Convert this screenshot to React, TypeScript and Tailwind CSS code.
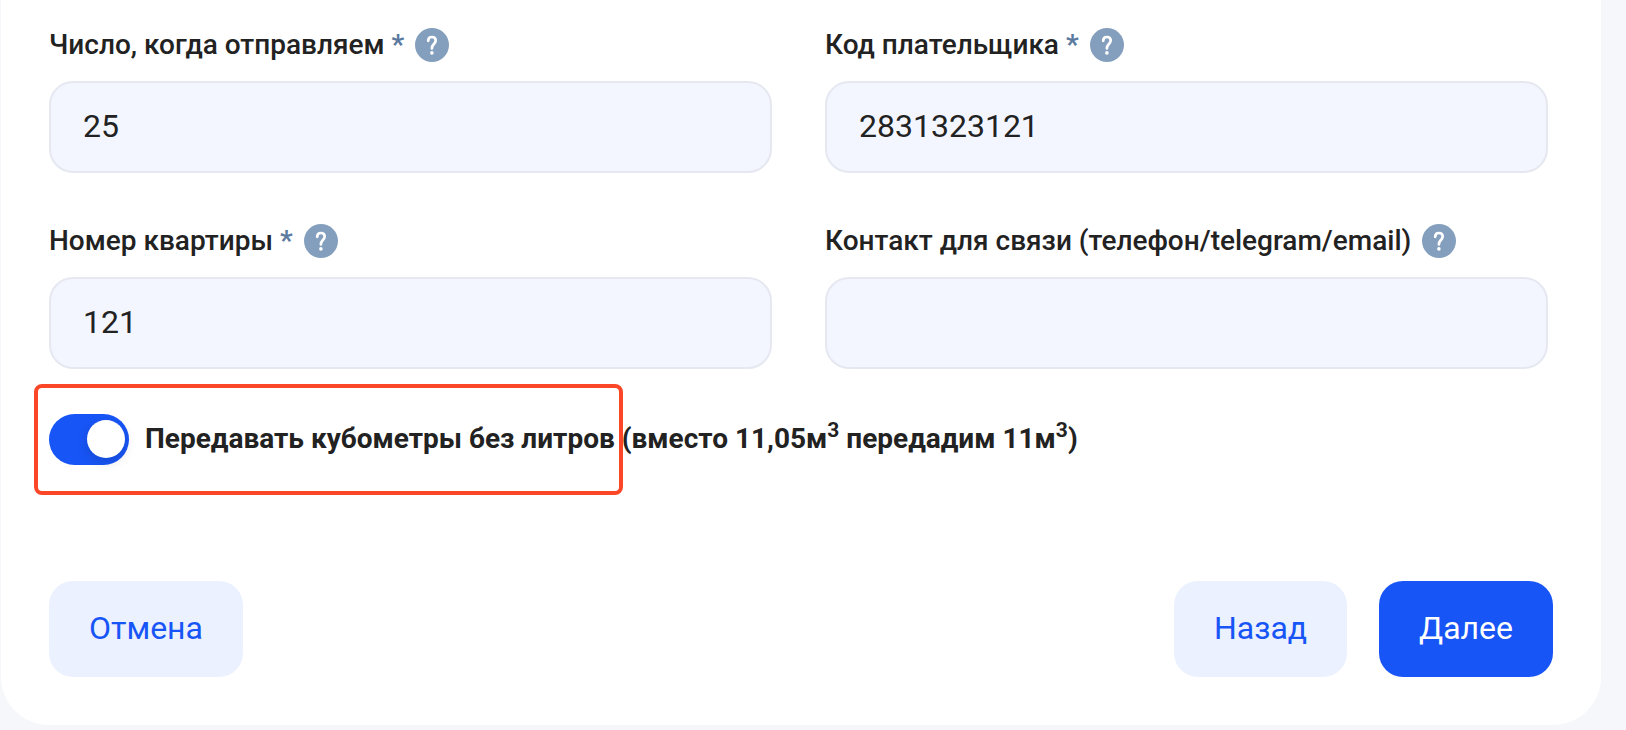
import React from "react";

interface FieldProps {
  id: string;
  label: string;
  required?: boolean;
  defaultValue?: string;
}

const HelpButton: React.FC = () => (
  <button
    type="button"
    aria-label="Подсказка"
    className="flex size-[34px] shrink-0 items-center justify-center rounded-full bg-[#849fbd]"
  >
    <svg viewBox="0 0 34 34" className="size-full" fill="none" aria-hidden="true">
      <path
        d="M13.2 12.8C13.2 10.4 14.7 9 16.9 9C19.2 9 20.7 10.4 20.7 12.6C20.7 14.2 19.9 15.1 18.7 16.3C17.4 17.6 16.9 18.5 16.9 20.4"
        stroke="white"
        strokeWidth="2.7"
        strokeLinecap="round"
        strokeLinejoin="round"
      />
      <circle cx="16.9" cy="24.9" r="1.8" fill="white" />
    </svg>
  </button>
);

const Field: React.FC<FieldProps> = ({
  id,
  label,
  required = false,
  defaultValue = "",
}) => (
  <div className="flex min-w-0 flex-col gap-[19px]">
    <div className="flex h-[34px] items-center gap-[11px]">
      <label htmlFor={id} className="text-[28px] leading-8 font-medium">
        {label}
        {required && <span className="font-bold text-[#5b7a9f]"> *</span>}
      </label>
      <HelpButton />
    </div>
    <input
      id={id}
      type="text"
      required={required}
      defaultValue={defaultValue}
      className="h-[92px] w-full rounded-3xl border-2 border-[#e5e8f0] bg-[#f3f6ff] px-8 pb-0.5 text-[32px] outline-none"
    />
  </div>
);

const fields: FieldProps[] = [
  {
    id: "day",
    label: "Число, когда отправляем",
    required: true,
    defaultValue: "25",
  },
  {
    id: "payer",
    label: "Код плательщика",
    required: true,
    defaultValue: "2831323121",
  },
  {
    id: "flat",
    label: "Номер квартиры",
    required: true,
    defaultValue: "121",
  },
  { id: "contact", label: "Контакт для связи (телефон/telegram/email)" },
];

const App: React.FC = () => {
  return (
    <div className="min-h-screen bg-[#f5f7fb] pr-[25px] pl-px font-['Roboto',sans-serif] text-[#222222]">
      <form
        onSubmit={(e) => e.preventDefault()}
        className="rounded-b-[48px] bg-white px-12 pt-7 pb-12"
      >
        <div className="grid grid-cols-2 gap-x-[53px] gap-y-[51px] pr-[5px]">
          {fields.map((field) => (
            <Field key={field.id} {...field} />
          ))}
        </div>

        <div className="relative mt-[45px] flex h-[51px] items-center gap-4">
          <input
            id="no-litres"
            type="checkbox"
            role="switch"
            defaultChecked
            className="flex h-[51px] w-20 shrink-0 appearance-none items-center rounded-full bg-[#c5cedb] px-1 pb-px before:size-[38px] before:rounded-full before:bg-white before:shadow-[0_4px_12px_rgba(0,0,0,0.15)] before:content-[''] checked:justify-end checked:bg-[#1855f6]"
          />
          <label
            htmlFor="no-litres"
            className="pb-0.5 text-[28px] leading-8 font-bold"
          >
            Передавать кубометры без литров (вместо 11,05м<sup>3</sup> передадим
            11м<sup>3</sup>)
          </label>
          {/* highlight frame */}
          <div className="pointer-events-none absolute -top-[30px] -left-[15px] h-[111px] w-[589px] rounded-lg border-4 border-[#fb4627]" />
        </div>

        <div className="mt-[116px] flex items-center gap-8 text-[32px]">
          <button
            type="button"
            className="mr-auto h-24 rounded-3xl bg-[#ebf1fe] px-10 pb-0.5 text-[#1855f6]"
          >
            Отмена
          </button>
          <button
            type="button"
            className="h-24 rounded-3xl bg-[#ebf1fe] px-10 pb-0.5 text-[#1855f6]"
          >
            Назад
          </button>
          <button
            type="submit"
            className="h-24 rounded-3xl bg-[#1855f6] px-10 pb-0.5 text-white"
          >
            Далее
          </button>
        </div>
      </form>
    </div>
  );
};

export default App;
